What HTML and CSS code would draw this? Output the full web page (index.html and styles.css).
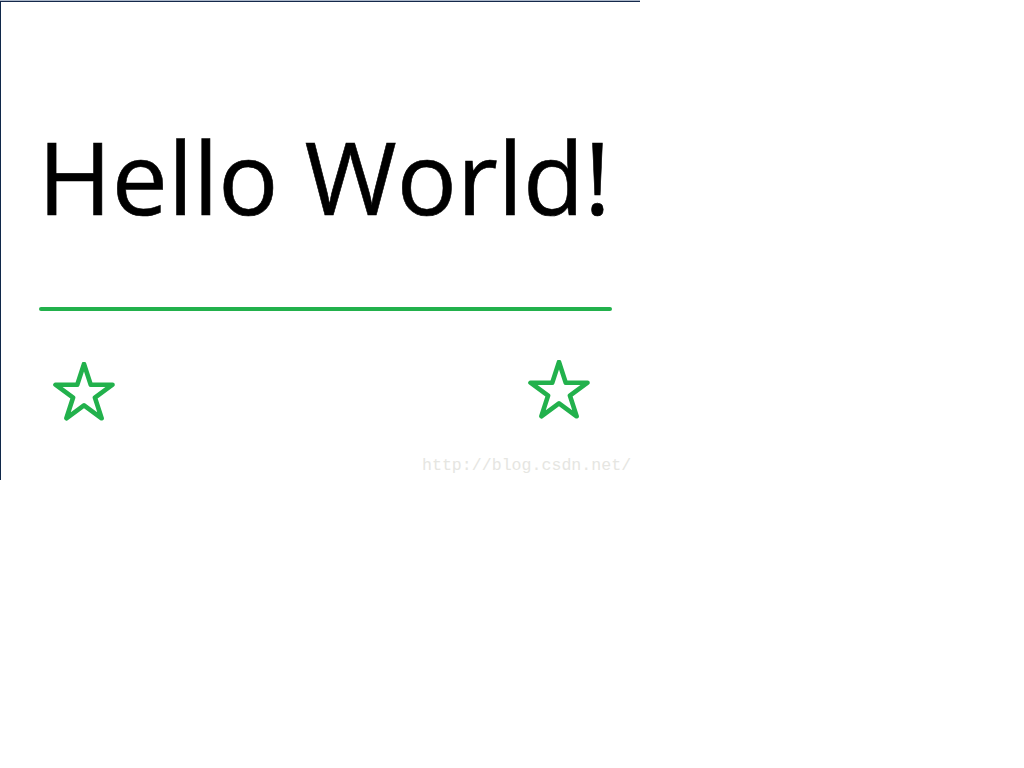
FILE: index.html
```html
<!DOCTYPE html>
<html>
<head>
<meta charset="utf-8">
<link rel="stylesheet" href="styles.css">
</head>
<body>
<div class="window">
  <div class="frame">
    <h1 class="title">Hello World!</h1>
    <div class="rule"></div>
    <div class="stars">
      <svg class="star" width="64" height="60" viewBox="0 0 64 60"><polygon points="32,2 38.74,22.73 60.53,22.73 42.9,35.54 49.63,56.27 32,43.46 14.37,56.27 21.1,35.54 3.47,22.73 25.26,22.73"/></svg>
      <svg class="star star-right" width="64" height="60" viewBox="0 0 64 60"><polygon points="32,2 38.74,22.73 60.53,22.73 42.9,35.54 49.63,56.27 32,43.46 14.37,56.27 21.1,35.54 3.47,22.73 25.26,22.73"/></svg>
    </div>
    <div class="watermark">http://blog.csdn.net/</div>
  </div>
</div>
</body>
</html>
```
FILE: styles.css
```css
html, body {
  margin: 0;
  padding: 0;
  background: #ffffff;
}
.window {
  width: 640px;
  height: 480px;
  border-top: 1px solid #aab6c8;
  box-sizing: border-box;
}
.frame {
  position: relative;
  box-sizing: border-box;
  height: 479px;
  border-top: 1px solid #15294b;
  border-left: 1px solid #10284a;
  padding: 0 0 0 37px;
}
.title {
  margin: 0;
  padding-top: 124px;
  font-family: "Open Sans", "Noto Sans", sans-serif;
  font-weight: 400;
  font-size: 100px;
  line-height: 100px;
  letter-spacing: 0;
  color: #000;
  white-space: nowrap;
  -webkit-text-stroke: 0.6px #000;
}
.rule {
  margin-top: 81px;
  margin-left: 1px;
  width: 573px;
  height: 4px;
  border-radius: 2px;
  background: #22b14c;
}
.stars {
  display: flex;
  justify-content: space-between;
  width: 539px;
  margin-top: 51px;
  padding-left: 14px;
}
.star polygon {
  fill: none;
  stroke: #22b14c;
  stroke-width: 4.6;
  stroke-linejoin: round;
}
.star-right {
  margin-top: -2px;
}
.watermark {
  position: absolute;
  left: 421px;
  top: 454px;
  font-family: "Liberation Mono", monospace;
  font-size: 16.6px;
  color: #e6e6e2;
}
```
